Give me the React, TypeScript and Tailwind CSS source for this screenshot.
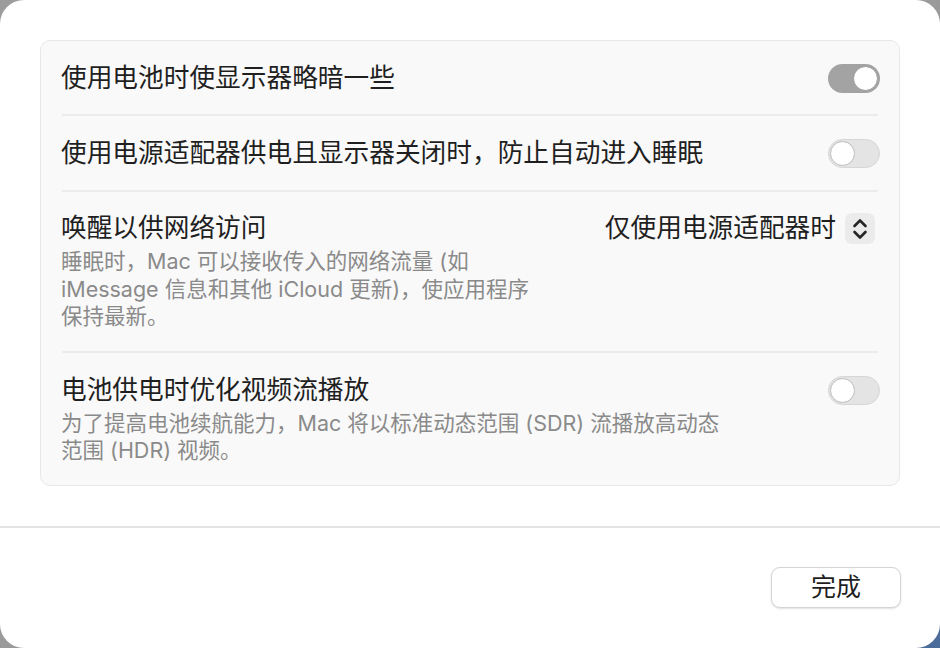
import React from "react";

const FONT = { fontFamily: 'Inter, "Noto Sans CJK SC", sans-serif' };

function Toggle({ on }: { on: boolean }) {
  return on ? (
    <div className="w-[52px] h-[29px] rounded-full bg-[#a3a3a3] flex items-center justify-end px-[2px] shrink-0">
      <div className="w-[25px] h-[25px] rounded-full bg-white border border-[#9a9a9a]" />
    </div>
  ) : (
    <div className="w-[52px] h-[29px] rounded-full bg-[#e4e4e4] border border-[#d6d6d6] flex items-center justify-start px-[1px] shrink-0">
      <div className="w-[25px] h-[25px] rounded-full bg-white border border-[#bdbdbd]" />
    </div>
  );
}

function Sep() {
  return <div className="h-[2px] bg-[#ececec] mx-[21px]" />;
}

export default function App() {
  return (
    <div
      className="w-[940px] h-[648px] bg-gradient-to-br from-[#9c9c9c] via-[#9a9a9a] to-[#4a6c9a] overflow-hidden"
      style={FONT}
    >
      <div className="w-[940px] h-[648px] bg-white rounded-[24px] flex flex-col">
        <div className="pt-[40px] px-[40px]">
          <div className="bg-[#f9f9f9] border border-[#e8e8e8] rounded-[10px] flex flex-col">
            {/* Row 1 */}
            <div className="flex items-center justify-between pl-[20px] pr-[19px] pt-[22px] pb-[21px]">
              <div className="text-[25.7px] leading-[30px] text-[#1f1f1f]">使用电池时使显示器略暗一些</div>
              <Toggle on />
            </div>
            <Sep />
            {/* Row 2 */}
            <div className="flex items-center justify-between pl-[20px] pr-[19px] pt-[22px] pb-[22px]">
              <div className="text-[25.7px] leading-[30px] text-[#1f1f1f]">使用电源适配器供电且显示器关闭时，防止自动进入睡眠</div>
              <Toggle on={false} />
            </div>
            <Sep />
            {/* Row 3 */}
            <div className="flex justify-between pl-[20px] pr-[24px] pt-[21px] pb-[20px]">
              <div className="flex flex-col">
                <div className="text-[25.7px] leading-[30px] text-[#1f1f1f]">唤醒以供网络访问</div>
                <div className="mt-[5px] text-[21.5px] leading-[27.5px] text-[#8a8a8a] whitespace-nowrap">
                  <div>睡眠时，Mac 可以接收传入的网络流量 (如</div>
                  <div>iMessage 信息和其他 iCloud 更新)，使应用程序</div>
                  <div>保持最新。</div>
                </div>
              </div>
              <div className="flex items-start gap-[9px]">
                <div className="text-[25.7px] leading-[30px] text-[#1f1f1f]">仅使用电源适配器时</div>
                <div className="w-[30px] h-[31px] rounded-[7px] bg-[#ebebeb] flex items-center justify-center">
                  <svg width="18" height="24" viewBox="0 0 18 24" fill="none" stroke="#262626" strokeWidth="2.6" strokeLinecap="round" strokeLinejoin="round">
                    <path d="M3.5 9 L9 3.5 L14.5 9" />
                    <path d="M3.5 15 L9 20.5 L14.5 15" />
                  </svg>
                </div>
              </div>
            </div>
            <Sep />
            {/* Row 4 */}
            <div className="flex justify-between pl-[20px] pr-[19px] pt-[22px] pb-[20px]">
              <div className="flex flex-col">
                <div className="text-[25.7px] leading-[30px] text-[#1f1f1f]">电池供电时优化视频流播放</div>
                <div className="mt-[5px] text-[21.5px] leading-[27.5px] text-[#8a8a8a] whitespace-nowrap">
                  <div>为了提高电池续航能力，Mac 将以标准动态范围 (SDR) 流播放高动态</div>
                  <div>范围 (HDR) 视频。</div>
                </div>
              </div>
              <div className="pt-[1px]">
                <Toggle on={false} />
              </div>
            </div>
          </div>
        </div>
        <div className="mt-[40px] h-[2px] bg-[#e3e3e3]" />
        <div className="flex justify-end pr-[39px] pt-[39px]">
          <div className="w-[130px] h-[41px] rounded-[9px] bg-white border border-[#d4d4d4] shadow-[0_1px_2px_rgba(0,0,0,0.12)] flex items-center justify-center text-[25px] leading-[30px] text-[#1f1f1f]">
            完成
          </div>
        </div>
      </div>
    </div>
  );
}
